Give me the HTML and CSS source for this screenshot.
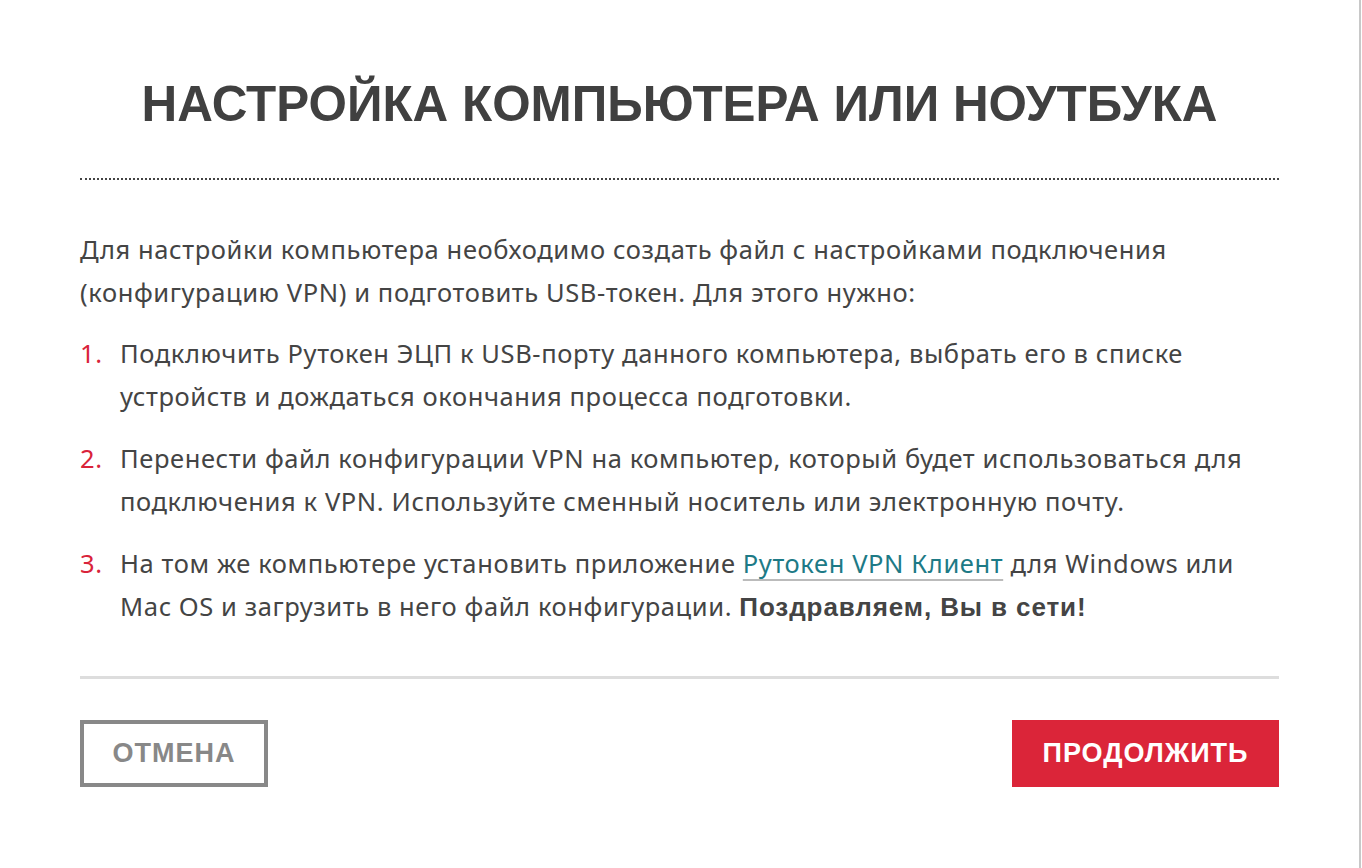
FILE: index.html
```html
<!DOCTYPE html>
<html lang="ru">
<head>
  <meta charset="UTF-8">
  <title>Настройка компьютера или ноутбука</title>
  <link rel="stylesheet" href="styles.css">
</head>
<body>
  <div class="dialog">
    <h1 class="dialog-title">Настройка компьютера или ноутбука</h1>
    <div class="dialog-body">
      <p>Для настройки компьютера необходимо создать файл с настройками подключения (конфигурацию VPN) и подготовить USB-токен. Для этого нужно:</p>
      <ol class="steps">
        <li>Подключить Рутокен ЭЦП к USB-порту данного компьютера, выбрать его в списке устройств и дождаться окончания процесса подготовки.</li>
        <li>Перенести файл конфигурации VPN на компьютер, который будет использоваться для подключения к VPN. Используйте сменный носитель или электронную почту.</li>
        <li>На том же компьютере установить приложение <a href="#">Рутокен VPN Клиент</a> для Windows или Mac OS и загрузить в него файл конфигурации. <strong>Поздравляем, Вы в сети!</strong></li>
      </ol>
    </div>
    <div class="dialog-actions">
      <button class="btn btn-cancel">Отмена</button>
      <button class="btn btn-primary">Продолжить</button>
    </div>
  </div>
</body>
</html>
```

FILE: styles.css
```css
html, body {
  margin: 0;
  padding: 0;
  background: #fff;
}
body {
  font-family: "Noto Sans", sans-serif;
  color: #444;
  overflow: hidden;
}
.dialog {
  box-sizing: border-box;
  width: 1361px;
  min-height: 868px;
  padding: 0 80px;
  border-right: 2px solid #c8c8c8;
}
.dialog-title {
  margin: 0;
  padding: 74px 0 44px;
  font-family: "Liberation Sans", Arial, sans-serif;
  font-size: 49.4px;
  font-weight: bold;
  line-height: 60px;
  text-align: center;
  text-transform: uppercase;
  color: #404040;
  border-bottom: 2px dotted #444;
}
.dialog-body {
  font-size: 25.5px;
  letter-spacing: 0.6px;
  line-height: 43px;
  padding: 48px 0 29px;
  border-bottom: 3px solid #ddd;
}
.dialog-body p {
  margin: 0 0 18px;
}
.steps {
  margin: 0;
  padding: 0;
  list-style: none;
  counter-reset: step;
}
.steps li {
  position: relative;
  padding-left: 40px;
  margin-bottom: 19px;
  counter-increment: step;
}
.steps li::before {
  content: counter(step) ".";
  position: absolute;
  left: 0;
  top: 0;
  color: #d9233a;
}
.steps a {
  line-height: 1;
  color: #1d7a86;
  text-decoration: underline;
  text-decoration-color: #bbb;
  text-decoration-thickness: 2px;
  text-underline-offset: 6px;
}
.steps strong {
  line-height: 1;
  font-family: "Liberation Sans", Arial, sans-serif;
  font-size: 26px;
  font-weight: bold;
  letter-spacing: 0.9px;
}
.dialog-actions {
  display: flex;
  justify-content: space-between;
  padding-top: 41px;
}
.btn {
  box-sizing: border-box;
  height: 67px;
  font-family: "Liberation Sans", Arial, sans-serif;
  font-size: 27px;
  font-weight: bold;
  letter-spacing: 1px;
  text-transform: uppercase;
  cursor: pointer;
}
.btn-cancel {
  width: 188px;
  background: #fff;
  color: #888;
  border: 4px solid #888;
}
.btn-primary {
  width: 267px;
  background: #db2539;
  color: #fff;
  border: none;
}
```
